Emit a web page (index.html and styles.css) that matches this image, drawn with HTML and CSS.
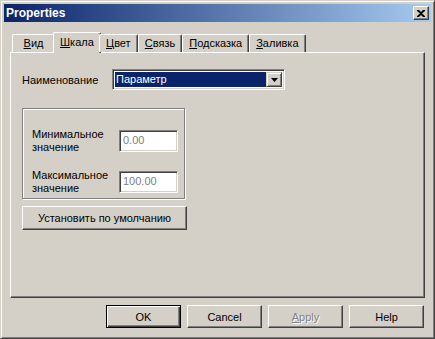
FILE: index.html
```html
<!DOCTYPE html>
<html lang="ru">

<head>
    <meta charset="UTF-8">
    <title>Properties</title>
    <link rel="stylesheet" href="styles.css">
</head>

<body>
    <div class="window">
        <div class="titlebar">
            <span class="title">Properties</span>
            <button class="close">
                <svg width="8" height="7" viewBox="0 0 8 7">
                    <path d="M0 0h2l2 2 2-2h2v1L5 3.5 8 6v1H6L4 5 2 7H0V6l3-2.5L0 1z" fill="#000"/>
                </svg>
            </button>
        </div>
        <div class="body">
            <div class="tabs">
                <div class="tab tab-first"><u>В</u>ид</div>
                <div class="tab active"><u>Ш</u>кала</div>
                <div class="tab"><u>Ц</u>вет</div>
                <div class="tab"><u>С</u>вязь</div>
                <div class="tab"><u>П</u>одсказка</div>
                <div class="tab"><u>З</u>аливка</div>
            </div>
            <div class="panel">
                <div class="name-row">
                    <label class="name-label">Наименование</label>
                    <div class="combo">
                        <div class="combo-value">Параметр</div>
                        <div class="combo-btn">
                            <svg width="7" height="4" viewBox="0 0 7 4">
                                <path d="M0 0h7L3.5 4z" fill="#000"/>
                            </svg>
                        </div>
                    </div>
                </div>
                <div class="group">
                    <div class="field">
                        <label>Минимальное<br>значение</label>
                        <div class="edit">0.00</div>
                    </div>
                    <div class="field">
                        <label>Максимальное<br>значение</label>
                        <div class="edit">100.00</div>
                    </div>
                </div>
                <button class="btn btn-wide">Установить по умолчанию</button>
            </div>
            <div class="actions">
                <button class="btn btn-default">OK</button>
                <button class="btn">Cancel</button>
                <button class="btn disabled"><u>A</u>pply</button>
                <button class="btn">Help</button>
            </div>
        </div>
    </div>
</body>
</html>
```

FILE: styles.css
```css
body {
    margin: 0;
    font-family: "Liberation Sans", Arial, sans-serif;
    font-size: 11px;
    color: #000;
}

.window {
    width: 435px;
    height: 339px;
    box-sizing: border-box;
    background-color: #d4d0c8;
    border-top: 1px solid #d4d0c8;
    border-left: 1px solid #d4d0c8;
    border-right: 1px solid #404040;
    border-bottom: 1px solid #404040;
    box-shadow: inset 1px 1px #fff, inset -1px -1px #808080;
    padding: 3px;
    display: flex;
    flex-direction: column;
}

.titlebar {
    height: 18px;
    display: flex;
    align-items: center;
    justify-content: space-between;
    padding: 0 2px 0 2px;
    background: linear-gradient(to right, #0a246a, #a6caf0);
}

.title {
    color: #fff;
    font-weight: bold;
    font-size: 12px;
}

.close {
    width: 16px;
    height: 14px;
    padding: 0;
    display: flex;
    align-items: center;
    justify-content: center;
    background-color: #d4d0c8;
    border-top: 1px solid #fff;
    border-left: 1px solid #fff;
    border-right: 1px solid #404040;
    border-bottom: 1px solid #404040;
    box-shadow: inset -1px -1px #808080;
}

.body {
    flex: 1;
    display: flex;
    flex-direction: column;
    padding: 10px 6px 0 6px;
}

.tabs {
    height: 20px;
    display: flex;
    align-items: flex-end;
    padding-left: 2px;
    position: relative;
    z-index: 1;
}

.tab {
    height: 18px;
    box-sizing: border-box;
    padding: 2px 6px 0 6px;
    min-width: 39px;
    text-align: center;
    border-top: 1px solid #fff;
    border-left: 1px solid #fff;
    border-right: 1px solid #404040;
    border-top-left-radius: 2px;
    border-top-right-radius: 2px;
    box-shadow: inset -1px 0 #808080;
    background-color: #d4d0c8;
}

.tab-first {
    min-width: 43px;
}

.tab.active {
    height: 21px;
    margin: 0 -2px -1px -2px;
    padding-top: 3px;
    min-width: 47px;
}

.panel {
    height: 246px;
    box-sizing: border-box;
    border-top: 1px solid #fff;
    border-left: 1px solid #fff;
    border-right: 1px solid #404040;
    border-bottom: 1px solid #404040;
    box-shadow: inset -1px -1px #808080;
    padding: 16px 0 0 11px;
}

.name-row {
    display: flex;
    align-items: center;
}

.name-label {
    width: 90px;
}

.combo {
    width: 173px;
    height: 21px;
    box-sizing: border-box;
    display: flex;
    background-color: #fff;
    border-top: 1px solid #808080;
    border-left: 1px solid #808080;
    border-right: 1px solid #fff;
    border-bottom: 1px solid #fff;
    box-shadow: inset 1px 1px #404040, inset -1px -1px #d4d0c8;
    padding: 2px 2px 2px 1px;
}

.combo-value {
    flex: 1;
    background-color: #0a246a;
    color: #fff;
    line-height: 15px;
    padding-left: 1px;
    margin-left: 1px;
}

.combo-btn {
    width: 16px;
    box-sizing: border-box;
    display: flex;
    align-items: center;
    justify-content: center;
    background-color: #d4d0c8;
    border-top: 1px solid #d4d0c8;
    border-left: 1px solid #d4d0c8;
    border-right: 1px solid #404040;
    border-bottom: 1px solid #404040;
    box-shadow: inset 1px 1px #fff, inset -1px -1px #808080;
}

.group {
    width: 163px;
    height: 91px;
    box-sizing: border-box;
    margin-top: 18px;
    border: 1px solid #808080;
    box-shadow: inset 1px 1px #fff, 1px 1px #fff;
    padding: 19px 0 0 9px;
    display: flex;
    flex-direction: column;
    gap: 15px;
}

.field {
    display: flex;
    align-items: center;
}

.field label {
    width: 87px;
    line-height: 13px;
}

.edit {
    width: 59px;
    height: 22px;
    box-sizing: border-box;
    background-color: #fff;
    color: #808080;
    border-top: 1px solid #808080;
    border-left: 1px solid #808080;
    border-right: 1px solid #fff;
    border-bottom: 1px solid #fff;
    box-shadow: inset 1px 1px #404040, inset -1px -1px #d4d0c8;
    padding: 3px 0 0 3px;
}

.btn {
    width: 75px;
    height: 23px;
    padding: 0;
    box-sizing: border-box;
    font-family: "Liberation Sans", Arial, sans-serif;
    font-size: 11px;
    color: #000;
    background-color: #d4d0c8;
    border-top: 1px solid #fff;
    border-left: 1px solid #fff;
    border-right: 1px solid #404040;
    border-bottom: 1px solid #404040;
    box-shadow: inset -1px -1px #808080;
}

.btn-wide {
    width: 165px;
    height: 24px;
    margin-top: 7px;
}

.btn-default {
    border: 1px solid #000;
    box-shadow: inset 1px 1px #fff, inset -1px -1px #404040, inset -2px -2px #808080;
}

.btn.disabled {
    color: #808080;
    text-shadow: 1px 1px #fff;
}

.actions {
    display: flex;
    justify-content: flex-end;
    gap: 6px;
    margin: 7px 1px 0 0;
}
```
